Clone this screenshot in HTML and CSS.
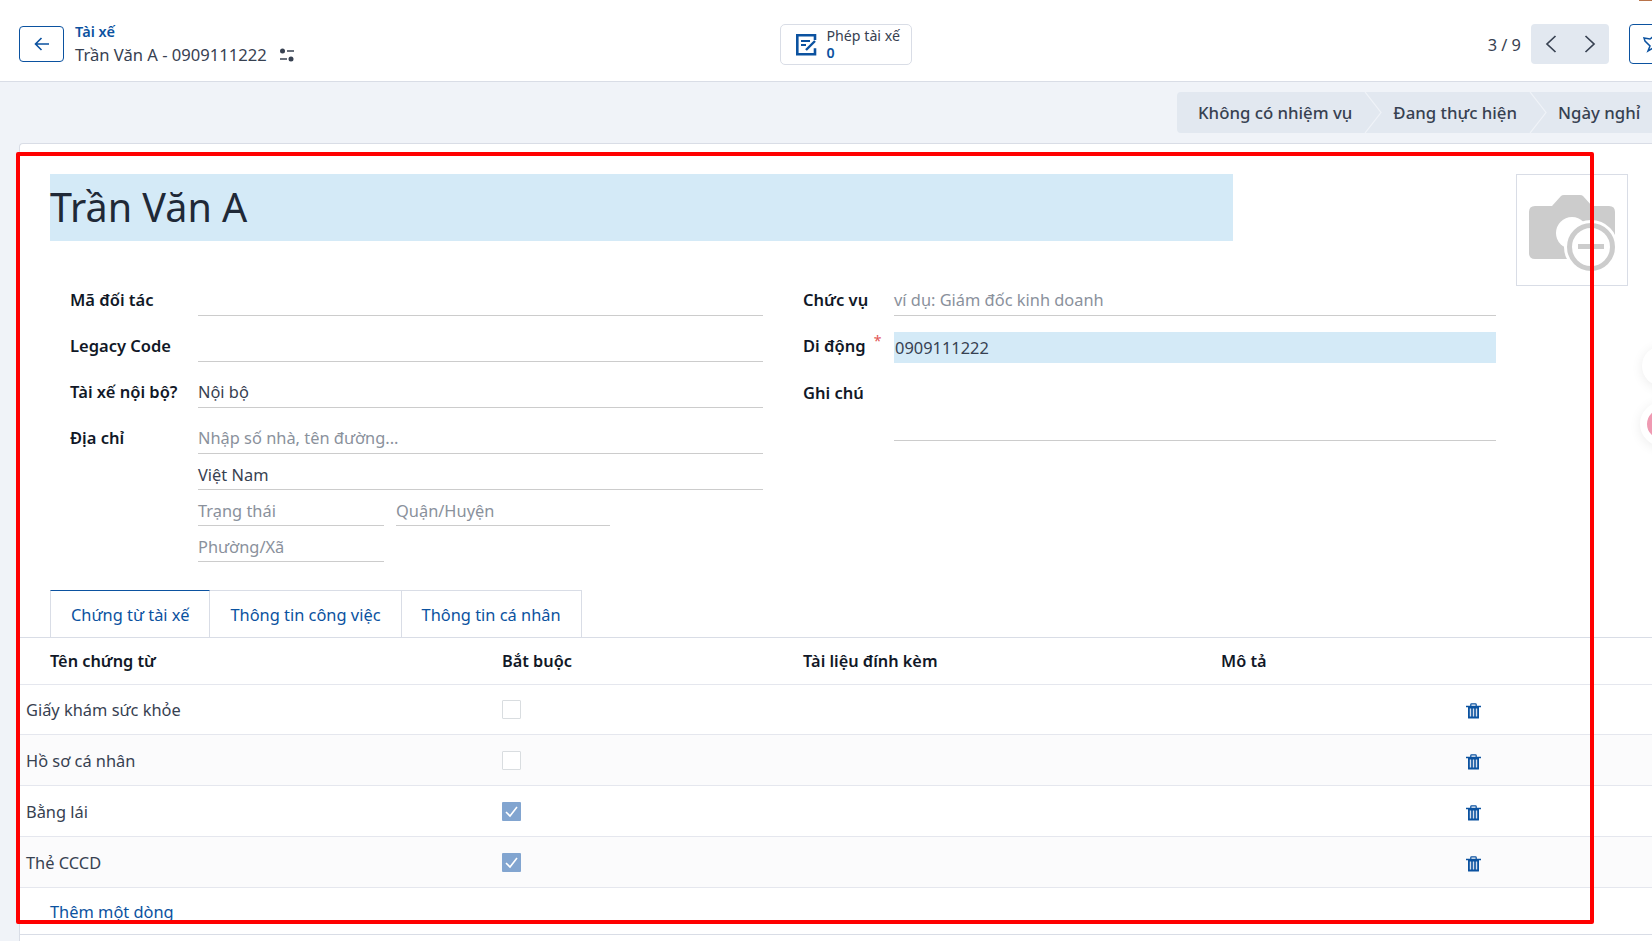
FILE: index.html
```html
<!DOCTYPE html>
<html lang="en">
<head>
  <meta charset="UTF-8">
  <meta name="viewport" content="width=device-width, initial-scale=1.0">
  <title>Tài xế</title>
  <link rel="stylesheet" href="styles.css">
</head>
<body>
  <header class="topbar">
    <div class="crumbs">
      <button class="back-btn">
        <svg width="18" height="18" viewBox="0 0 18 18"><path d="M16 9H2.5M8.5 3L2.5 9l6 6" fill="none" stroke="#0b52a0" stroke-width="1.6"/></svg>
      </button>
      <div class="crumb-text">
        <div class="crumb-parent">Tài xế</div>
        <div class="crumb-current">Trần Văn A - 0909111222
          <svg class="crumb-gear" width="16" height="14" viewBox="0 0 16 14"><circle cx="3.5" cy="3" r="2.5" fill="#374151"/><path d="M8 3h7M1 11h7" stroke="#374151" stroke-width="1.4"/><circle cx="12" cy="11" r="2.5" fill="#374151"/></svg>
        </div>
      </div>
    </div>
    <div class="stat-wrap">
      <button class="stat-btn">
        <svg width="24" height="24" viewBox="0 0 24 24"><path d="M21 8V3.300H3.300v19H21v-6" fill="none" stroke="#0b52a0" stroke-width="2.600"/><path d="M7 9h9M7 13h5" stroke="#0b52a0" stroke-width="2"/><path d="M12 18l9-9" stroke="#0b52a0" stroke-width="2.400"/></svg>
        <span class="stat-text">Phép tài xế<b>0</b></span>
      </button>
    </div>
    <div class="pager">
      <span class="pager-count">3 / 9</span>
      <div class="pager-nav">
        <svg width="14" height="18" viewBox="0 0 14 18"><path d="M11.500 1L3 9l8.500 8" fill="none" stroke="#374151" stroke-width="1.700"/></svg>
        <svg width="14" height="18" viewBox="0 0 14 18"><path d="M2.500 1L11 9l-8.500 8" fill="none" stroke="#374151" stroke-width="1.700"/></svg>
      </div>
      <button class="pin-btn">
        <svg width="18" height="18" viewBox="0 0 18 18"><path d="M1 3l6 1 4-3 6 6-3 4 1 6-5-4-5 3 2-5-5-5z" fill="none" stroke="#0b52a0" stroke-width="1.500"/></svg>
      </button>
    </div>
  </header>

  <div class="statusbar">
    <div class="status-list">
      <div class="status-item">Không có nhiệm vụ<svg class="chevron" width="18" height="41" viewBox="0 0 18 41"><path d="M1 0l16 20.500L1 41" fill="none" stroke="#f0f3f8" stroke-width="1.200"/></svg></div>
      <div class="status-item">Đang thực hiện<svg class="chevron" width="18" height="41" viewBox="0 0 18 41"><path d="M1 0l16 20.500L1 41" fill="none" stroke="#f0f3f8" stroke-width="1.200"/></svg></div>
      <div class="status-item">Ngày nghỉ</div>
    </div>
  </div>

  <main class="sheet">
    <div class="sheet-head">
      <div class="name-field">Trần Văn A</div>
      <div class="avatar">
        <svg width="110" height="110" viewBox="0 0 110 110">
          <path d="M18 31H35L44 21Q45 20 47 20H63Q65 20 66 21L75 31H92Q98 31 98 37V78Q98 84 92 84H18Q12 84 12 78V37Q12 31 18 31z" fill="#ccc"/>
          <circle cx="55" cy="58" r="16" fill="#fff"/>
          <circle cx="74" cy="72" r="27" fill="#fff"/>
          <circle cx="74" cy="72" r="21.500" fill="#fff" stroke="#ccc" stroke-width="5"/>
          <rect x="61" y="69" width="26" height="5" fill="#ccc"/>
        </svg>
      </div>
    </div>

    <div class="form-grid">
      <div class="form-col">
        <div class="field"><label>Mã đối tác</label><div class="value"></div></div>
        <div class="field"><label>Legacy Code</label><div class="value"></div></div>
        <div class="field"><label>Tài xế nội bộ?</label><div class="value">Nội bộ</div></div>
        <div class="field field-address">
          <label>Địa chỉ</label>
          <div class="address">
            <div class="value muted tall">Nhập số nhà, tên đường...</div>
            <div class="value short">Việt Nam</div>
            <div class="address-row">
              <div class="value short muted state">Trạng thái</div>
              <div class="value short muted district">Quận/Huyện</div>
            </div>
            <div class="value short muted state">Phường/Xã</div>
          </div>
        </div>
      </div>
      <div class="form-col form-col-right">
        <div class="field"><label>Chức vụ</label><div class="value muted">ví dụ: Giám đốc kinh doanh</div></div>
        <div class="field"><label>Di động <sup class="req">*</sup></label><div class="value required">0909111222</div></div>
        <div class="field"><label>Ghi chú</label><div class="value notes"></div></div>
      </div>
    </div>

    <div class="tabs">
      <div class="tab active">Chứng từ tài xế</div>
      <div class="tab">Thông tin công việc</div>
      <div class="tab">Thông tin cá nhân</div>
    </div>

    <div class="doc-table">
      <div class="doc-row doc-head">
        <div class="col-name">Tên chứng từ</div>
        <div class="col-req">Bắt buộc</div>
        <div class="col-file">Tài liệu đính kèm</div>
        <div class="col-desc">Mô tả</div>
      </div>
      <div class="doc-row">
        <div class="col-name">Giấy khám sức khỏe</div>
        <div class="col-req"><span class="check"></span></div>
        <div class="col-file"></div><div class="col-desc"></div>
        <svg class="trash" viewBox="0 0 15 16"><use href="#trash-icon"/></svg>
      </div>
      <div class="doc-row">
        <div class="col-name">Hồ sơ cá nhân</div>
        <div class="col-req"><span class="check"></span></div>
        <div class="col-file"></div><div class="col-desc"></div>
        <svg class="trash" viewBox="0 0 15 16"><use href="#trash-icon"/></svg>
      </div>
      <div class="doc-row">
        <div class="col-name">Bằng lái</div>
        <div class="col-req"><span class="check on"><svg width="19" height="19" viewBox="0 0 19 19"><path d="M4 10l4 4 7-9" fill="none" stroke="#fff" stroke-width="1.600"/></svg></span></div>
        <div class="col-file"></div><div class="col-desc"></div>
        <svg class="trash" viewBox="0 0 15 16"><use href="#trash-icon"/></svg>
      </div>
      <div class="doc-row">
        <div class="col-name">Thẻ CCCD</div>
        <div class="col-req"><span class="check on"><svg width="19" height="19" viewBox="0 0 19 19"><path d="M4 10l4 4 7-9" fill="none" stroke="#fff" stroke-width="1.600"/></svg></span></div>
        <div class="col-file"></div><div class="col-desc"></div>
        <svg class="trash" viewBox="0 0 15 16"><use href="#trash-icon"/></svg>
      </div>
      <div class="add-line">Thêm một dòng</div>
      <div class="table-foot"></div>
    </div>
  </main>

  <div class="red-frame"></div>
  <div class="top-sliver"></div>
  <div class="float-btn float-white"></div>
  <div class="float-btn float-pink"></div>

  <svg width="0" height="0" class="icon-defs">
    <symbol id="trash-icon" viewBox="0 0 15 16">
      <path d="M0 3.500h15" stroke="#0b52a0" stroke-width="1.500"/>
      <path d="M4.800 3V1.600q0-.8.800-.8h3.800q.8 0 .8.800V3" fill="none" stroke="#0b52a0" stroke-width="1.200"/>
      <path d="M2 3.500h11V15q0 .5-.5.500h-10Q2 15.500 2 15z" fill="#0b52a0"/>
      <path d="M4.500 5.500v8M7.500 5.500v8M10.500 5.500v8" stroke="#d5deec" stroke-width="1.400"/>
    </symbol>
  </svg>
</body>
</html>
```
FILE: styles.css
```css
html, body {
  margin: 0;
  height: 941px;
  overflow: hidden;
}
body {
  font-family: "Noto Sans", sans-serif;
  font-size: 16.4px;
  background-color: #f0f3f8;
  color: #374151;
  position: relative;
}
button {
  font-family: inherit;
  background: #fff;
  cursor: pointer;
}

.topbar {
  height: 82px;
  box-sizing: border-box;
  background-color: #fff;
  border-bottom: 1px solid #d9dde6;
  display: grid;
  grid-template-columns: 1fr auto 1fr;
  align-items: center;
  padding: 7px 0 0 19px;
}
.crumbs {
  display: flex;
  align-items: center;
  gap: 11px;
}
.back-btn {
  width: 45px;
  height: 36px;
  border: 1px solid #0b52a0;
  border-radius: 4px;
  display: flex;
  align-items: center;
  justify-content: center;
  padding: 0;
}
.crumb-parent {
  font-size: 14.5px;
  font-weight: 600;
  color: #0b52a0;
  line-height: 21px;
}
.crumb-current {
  font-size: 16.6px;
  line-height: 26px;
  display: flex;
  align-items: center;
  gap: 12px;
}
.stat-wrap {
  margin-left: 20px;
}
.stat-btn {
  width: 132px;
  height: 41px;
  border: 1px solid #d9dde6;
  border-radius: 5px;
  display: flex;
  align-items: center;
  gap: 9px;
  padding: 0 0 0 13px;
  color: #374151;
}
.stat-text {
  font-size: 14.2px;
  line-height: 17px;
  text-align: left;
}
.stat-text b {
  display: block;
  color: #0b52a0;
  font-weight: 600;
}
.pager {
  display: flex;
  align-items: center;
  justify-content: flex-end;
  margin-right: -18px;
}
.pager-count {
  margin-right: 10px;
}
.pager-nav {
  width: 78px;
  height: 40px;
  background-color: #e2e8f0;
  border-radius: 4px;
  display: flex;
  align-items: center;
  justify-content: space-around;
}
.pin-btn {
  width: 41px;
  height: 40px;
  margin-left: 20px;
  border: 1px solid #0b52a0;
  border-radius: 4px;
  display: flex;
  align-items: center;
  justify-content: flex-start;
  padding: 0 0 0 13px;
}

.statusbar {
  display: flex;
  justify-content: flex-end;
  padding-top: 10px;
  height: 61px;
  box-sizing: border-box;
}
.status-list {
  display: flex;
  width: 475px;
  flex: none;
  height: 41px;
  background-color: #e2e8f0;
  border-radius: 4px 0 0 4px;
  font-size: 16.8px;
  font-weight: 500;
}
.status-item {
  position: relative;
  line-height: 41px;
  padding: 0 22px 0 19px;
  white-space: nowrap;
}
.status-item:first-child {
  padding-left: 21px;
}
.chevron {
  position: absolute;
  right: -8px;
  top: 0;
}

.sheet {
  margin-left: 19px;
  background-color: #fff;
  border: 1px solid #d9dde6;
  border-right: 0;
  border-radius: 4px 0 0 0;
  padding-top: 30px;
}
.sheet-head {
  display: flex;
  padding-left: 30px;
  height: 111px;
}
.name-field {
  width: 1183px;
  height: 67px;
  background-color: #d4eaf7;
  color: #1f2937;
  font-size: 39.5px;
  line-height: 67px;
}
.avatar {
  width: 110px;
  height: 110px;
  margin-left: 283px;
  border: 1px solid #d9dde6;
}

.form-grid {
  display: flex;
  padding-left: 50px;
  margin-top: -3px;
}
.form-col {
  width: 693px;
}
.form-col-right {
  width: 693px;
  margin-left: 40px;
}
.field {
  display: flex;
  margin-top: 12px;
}
.form-col > .field:first-child {
  margin-top: 0;
}
label {
  width: 128px;
  height: 34px;
  flex: none;
  font-size: 16.5px;
  font-weight: 600;
  color: #111827;
  line-height: 36px;
}
.form-col-right label {
  width: 91px;
}
.value {
  flex: 1;
  height: 34px;
  box-sizing: border-box;
  border-bottom: 1px solid #ccc;
  line-height: 35px;
}
.muted {
  color: #8a919c;
}
.value.short {
  flex: none;
  height: 36px;
  line-height: 42px;
  white-space: nowrap;
}
.address {
  flex: 1;
}
.address-row {
  display: flex;
  gap: 12px;
}
.value.state {
  width: 186px;
}
.value.district {
  width: 214px;
}
.req {
  color: #e25555;
  font-weight: 400;
  font-size: 14px;
  line-height: 0;
  margin-left: 4px;
}
.value.required {
  background-color: #d4eaf7;
  border-bottom: 0;
  height: 31px;
  margin-top: 4px;
  padding-left: 1px;
  line-height: 31px;
}
.value.notes {
  height: 66px;
}

.tabs {
  display: flex;
  padding-left: 30px;
  margin-top: 28px;
  height: 47px;
  border-bottom: 1px solid #d9dde6;
}
.tab {
  height: 47px;
  box-sizing: border-box;
  background-color: #fff;
  border: 1px solid #d9dde6;
  border-left: 0;
  border-bottom: 0;
  color: #0b52a0;
  padding: 0 20px;
  line-height: 47px;
  white-space: nowrap;
}
.tab.active {
  border-left: 1px solid #d9dde6;
  border-top: 1px solid #0b52a0;
}

.doc-row {
  display: flex;
  align-items: center;
  position: relative;
  height: 51px;
  box-sizing: border-box;
  border-bottom: 1px solid #e5e7ee;
}
.doc-row:nth-child(odd) {
  background-color: #fbfbfc;
}
.doc-row:nth-child(2) {
  height: 50px;
}
.doc-row.doc-head {
  height: 47px;
  font-size: 16.3px;
  font-weight: 600;
  color: #111827;
  background-color: #fff;
}
.col-name {
  width: 482px;
  padding-left: 6px;
  box-sizing: border-box;
}
.doc-head .col-name {
  padding-left: 30px;
}
.col-req {
  width: 301px;
  display: flex;
}
.col-file {
  width: 418px;
}
.col-desc {
  width: 245px;
}
.check {
  width: 19px;
  height: 19px;
  box-sizing: border-box;
  border: 1px solid #d9dde0;
  border-radius: 1px;
  background-color: #fff;
  display: block;
}
.check.on {
  border: 0;
  background-color: #82a5d0;
}
.check svg {
  display: block;
}
.trash {
  width: 15px;
  height: 16px;
  flex: none;
  margin-top: 3px;
}
.add-line {
  color: #0b52a0;
  padding-left: 30px;
  height: 46px;
  line-height: 47px;
}
.table-foot {
  border-top: 1px solid #d9dde6;
  height: 20px;
}

/* annotation and floating widgets on top of the page */
.red-frame {
  position: absolute;
  left: 16px;
  top: 152px;
  width: 1570px;
  height: 764px;
  border: 4px solid #f00;
  border-radius: 2px;
  pointer-events: none;
}
.top-sliver {
  position: absolute;
  left: 1639px;
  top: 0;
  width: 13px;
  height: 1px;
  background-color: #b8734a;
}
.float-btn {
  position: absolute;
  border-radius: 50%;
  background-color: #fff;
  box-shadow: 0 2px 12px rgba(0, 0, 0, 0.08);
}
.float-white {
  left: 1642px;
  top: 346px;
  width: 40px;
  height: 40px;
}
.float-pink {
  left: 1640px;
  top: 402px;
  width: 44px;
  height: 44px;
  box-sizing: border-box;
  background-color: #ef9ab2;
  border: 7px solid #fff;
}
.icon-defs {
  position: absolute;
}
```
